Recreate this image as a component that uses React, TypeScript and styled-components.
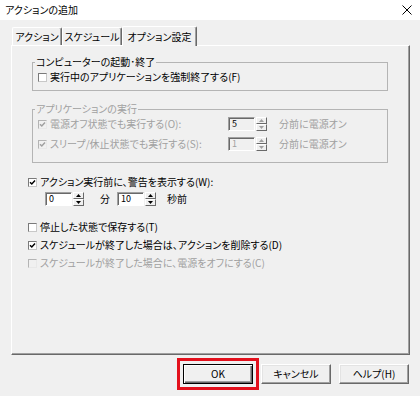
import React from 'react'
import styled, { createGlobalStyle } from 'styled-components'

const GlobalStyle = createGlobalStyle`
  html, body {
    margin: 0;
    padding: 0;
    background: #f0f0f0;
  }
  body {
    font-family: "Noto Sans CJK JP", "Noto Sans", sans-serif;
    font-size: 10px;
    font-feature-settings: "palt";
    color: #000;
  }
`

const Window = styled.div`
  width: 420px;
  height: 396px;
  background: #f0f0f0;
  display: flex;
  flex-direction: column;
`

const TitleBar = styled.div`
  height: 20px;
  background: #fff;
  display: flex;
  align-items: center;
  justify-content: space-between;
  padding: 0 8px 0 5px;
  box-sizing: border-box;
`

const Title = styled.span`
  font-size: 10px;
  line-height: 12px;
`

const Body = styled.div`
  padding: 5px 10px 0 11px;
`

const TabStrip = styled.div`
  display: flex;
  align-items: flex-end;
  height: 20px;
  padding-left: 1px;
`

const Tab = styled.div<{ $active?: boolean; $w: number }>`
  width: ${({ $w }) => $w}px;
  height: ${({ $active }) => ($active ? 20 : 18)}px;
  margin-bottom: ${({ $active }) => ($active ? -1 : 0)}px;
  box-sizing: border-box;
  border-top: 1px solid #fff;
  border-left: 1px solid #fff;
  border-right: 1px solid #696969;
  box-shadow: inset -1px 0 0 #a0a0a0;
  border-radius: 2px 2px 0 0;
  background: #f0f0f0;
  display: flex;
  align-items: center;
  justify-content: center;
  line-height: 12px;
  position: relative;
  z-index: ${({ $active }) => ($active ? 1 : 0)};
`

const Panel = styled.div`
  height: 310px;
  box-sizing: border-box;
  border-top: 1px solid #fff;
  border-left: 1px solid #fff;
  border-right: 1px solid #696969;
  border-bottom: 1px solid #696969;
  box-shadow: inset -1px -1px 0 #a0a0a0;
  padding: 10px 21px 0 16px;
  display: flex;
  flex-direction: column;
`

const Group = styled.fieldset<{ $mt?: number }>`
  margin: ${({ $mt }) => $mt || 0}px 0 0 4px;
  padding: ${({ $mt }) => ($mt ? '2px 0 11px 5px' : '3px 0 7px 5px')};
  border: 1px solid #b4b4b4;
  min-width: 0;
  display: flex;
  flex-direction: column;
  gap: 6px;
`

const Legend = styled.legend<{ $disabled?: boolean }>`
  padding: 0 1px;
  margin-left: -3px;
  line-height: 12px;
  color: ${({ $disabled }) => ($disabled ? '#a0a0a0' : '#000')};
`

const Stack = styled.div<{ $mt: number; $gap: number }>`
  margin-top: ${({ $mt }) => $mt}px;
  display: flex;
  flex-direction: column;
  gap: ${({ $gap }) => $gap}px;
`

const CheckRow = styled.label<{ $disabled?: boolean }>`
  display: flex;
  align-items: center;
  gap: 3px;
  height: 12px;
  line-height: 12px;
  white-space: nowrap;
  color: ${({ $disabled }) => ($disabled ? '#a0a0a0' : '#000')};
`

const Box = styled.span<{ $disabled?: boolean }>`
  width: 9px;
  height: 9px;
  box-sizing: border-box;
  border: 1px solid;
  border-color: ${({ $disabled }) => ($disabled ? '#b4b4b4 #e8e8e8 #e8e8e8 #b4b4b4' : '#7a7a7a #c8c8c8 #c8c8c8 #7a7a7a')};
  background: ${({ $disabled }) => ($disabled ? '#f0f0f0' : '#fff')};
  display: flex;
  align-items: center;
  justify-content: center;
  flex-shrink: 0;
`

const OptionRow = styled.div`
  display: grid;
  grid-template-columns: 190px auto 1fr;
  align-items: center;
  height: 14px;
`

const Note = styled.span<{ $disabled?: boolean }>`
  padding-left: 12px;
  line-height: 12px;
  color: ${({ $disabled }) => ($disabled ? '#a0a0a0' : '#000')};
`

const SpinRow = styled.div`
  display: flex;
  align-items: center;
  height: 14px;
  margin-left: 17px;
`

const Unit = styled.span<{ $pl: number; $pr?: number }>`
  padding: 0 ${({ $pr }) => $pr || 0}px 0 ${({ $pl }) => $pl}px;
  line-height: 12px;
`

const SpinWrap = styled.div`
  display: flex;
  align-items: center;
  gap: 1px;
`

const Edit = styled.div<{ $disabled?: boolean; $dim?: boolean }>`
  width: 27px;
  height: 14px;
  box-sizing: border-box;
  border: 1px solid;
  border-color: #a0a0a0 #fff #fff #a0a0a0;
  box-shadow: inset 1px 1px 0 #696969;
  background: ${({ $disabled }) => ($disabled ? '#f0f0f0' : '#fff')};
  color: ${({ $dim }) => ($dim ? '#a0a0a0' : '#000')};
  font-size: 9px;
  line-height: 12px;
  padding-left: 3px;
`

const Spinner = styled.div`
  display: flex;
  flex-direction: column;
  width: 11px;
  height: 14px;
`

const SpinButton = styled.div`
  flex: 1;
  box-sizing: border-box;
  border: 1px solid;
  border-color: #fff #696969 #696969 #fff;
  background: #f0f0f0;
  display: flex;
  align-items: center;
  justify-content: center;
`

const Footer = styled.div`
  display: flex;
  justify-content: flex-end;
  gap: 8px;
  padding: 9px 1px 0 0;
`

const Button = styled.button<{ $default?: boolean }>`
  width: 70px;
  height: 20px;
  box-sizing: border-box;
  padding: 0;
  font: inherit;
  font-size: 10px;
  line-height: 12px;
  color: #000;
  background: #f0f0f0;
  border: 1px solid;
  border-color: ${({ $default }) => ($default ? '#000' : '#fff #696969 #696969 #fff')};
  box-shadow: ${({ $default }) =>
    $default
      ? 'inset 1px 1px 0 #fff, inset -1px -1px 0 #696969, inset -2px -2px 0 #a0a0a0'
      : 'inset -1px -1px 0 #a0a0a0, inset 1px 1px 0 #e3e3e3'};
  outline: ${({ $default }) => ($default ? '3px solid #e3101c' : 'none')};
  outline-offset: 3px;
`

const Check = ({ on, disabled }: { on: boolean; disabled?: boolean }) => (
  <Box $disabled={disabled}>
    {on && (
      <svg width="7" height="7" viewBox="0 0 7 7">
        <path d="M1 3.2 L2.8 5 L6 1.6" fill="none" stroke={disabled ? '#a0a0a0' : '#000'} strokeWidth="1.5" />
      </svg>
    )}
  </Box>
)

const CheckItem = ({ on, disabled, children }: { on: boolean; disabled?: boolean; children: React.ReactNode }) => (
  <CheckRow $disabled={disabled}>
    <Check on={on} disabled={disabled} />
    <span>{children}</span>
  </CheckRow>
)

const Arrow = ({ up, disabled }: { up?: boolean; disabled?: boolean }) => (
  <svg width="5" height="3" viewBox="0 0 5 3">
    <path d={up ? 'M0 3 L2.5 0 L5 3 Z' : 'M0 0 L5 0 L2.5 3 Z'} fill={disabled ? '#a0a0a0' : '#000'} />
  </svg>
)

const Spin = ({ value, disabled, dim }: { value: string; disabled?: boolean; dim?: boolean }) => (
  <SpinWrap>
    <Edit $disabled={disabled} $dim={dim}>{value}</Edit>
    <Spinner>
      <SpinButton><Arrow up disabled={disabled} /></SpinButton>
      <SpinButton><Arrow disabled={disabled} /></SpinButton>
    </Spinner>
  </SpinWrap>
)

export default function App() {
  return (
    <Window>
      <GlobalStyle />
      <TitleBar>
        <Title>アクションの追加</Title>
        <svg width="10" height="10" viewBox="0 0 10 10">
          <path d="M0.5 0.5 L9.5 9.5 M9.5 0.5 L0.5 9.5" stroke="#000" strokeWidth="1" />
        </svg>
      </TitleBar>
      <Body>
        <TabStrip>
          <Tab $w={50}>アクション</Tab>
          <Tab $w={60}>スケジュール</Tab>
          <Tab $w={75} $active>オプション設定</Tab>
        </TabStrip>
        <Panel>
          <Group>
            <Legend>コンピューターの起動･終了</Legend>
            <CheckItem on={false}>実行中のアプリケーションを強制終了する(F)</CheckItem>
          </Group>
          <Group $mt={12} disabled>
            <Legend $disabled>アプリケーションの実行</Legend>
            <OptionRow>
              <CheckItem on disabled>電源オフ状態でも実行する(O):</CheckItem>
              <Spin value="5" disabled />
              <Note $disabled>分前に電源オン</Note>
            </OptionRow>
            <OptionRow>
              <CheckItem on disabled>スリープ/休止状態でも実行する(S):</CheckItem>
              <Spin value="1" disabled dim />
              <Note $disabled>分前に電源オン</Note>
            </OptionRow>
          </Group>
          <Stack $mt={13} $gap={4}>
            <CheckItem on>アクション実行前に、警告を表示する(W):</CheckItem>
            <SpinRow>
              <Spin value="0" />
              <Unit $pl={16} $pr={7}>分</Unit>
              <Spin value="10" />
              <Unit $pl={11}>秒前</Unit>
            </SpinRow>
          </Stack>
          <Stack $mt={15} $gap={6}>
            <CheckItem on={false}>停止した状態で保存する(T)</CheckItem>
            <CheckItem on>スケジュールが終了した場合は、アクションを削除する(D)</CheckItem>
            <CheckItem on={false} disabled>スケジュールが終了した場合に、電源をオフにする(C)</CheckItem>
          </Stack>
        </Panel>
        <Footer>
          <Button $default>OK</Button>
          <Button>キャンセル</Button>
          <Button>ヘルプ(H)</Button>
        </Footer>
      </Body>
    </Window>
  )
}
